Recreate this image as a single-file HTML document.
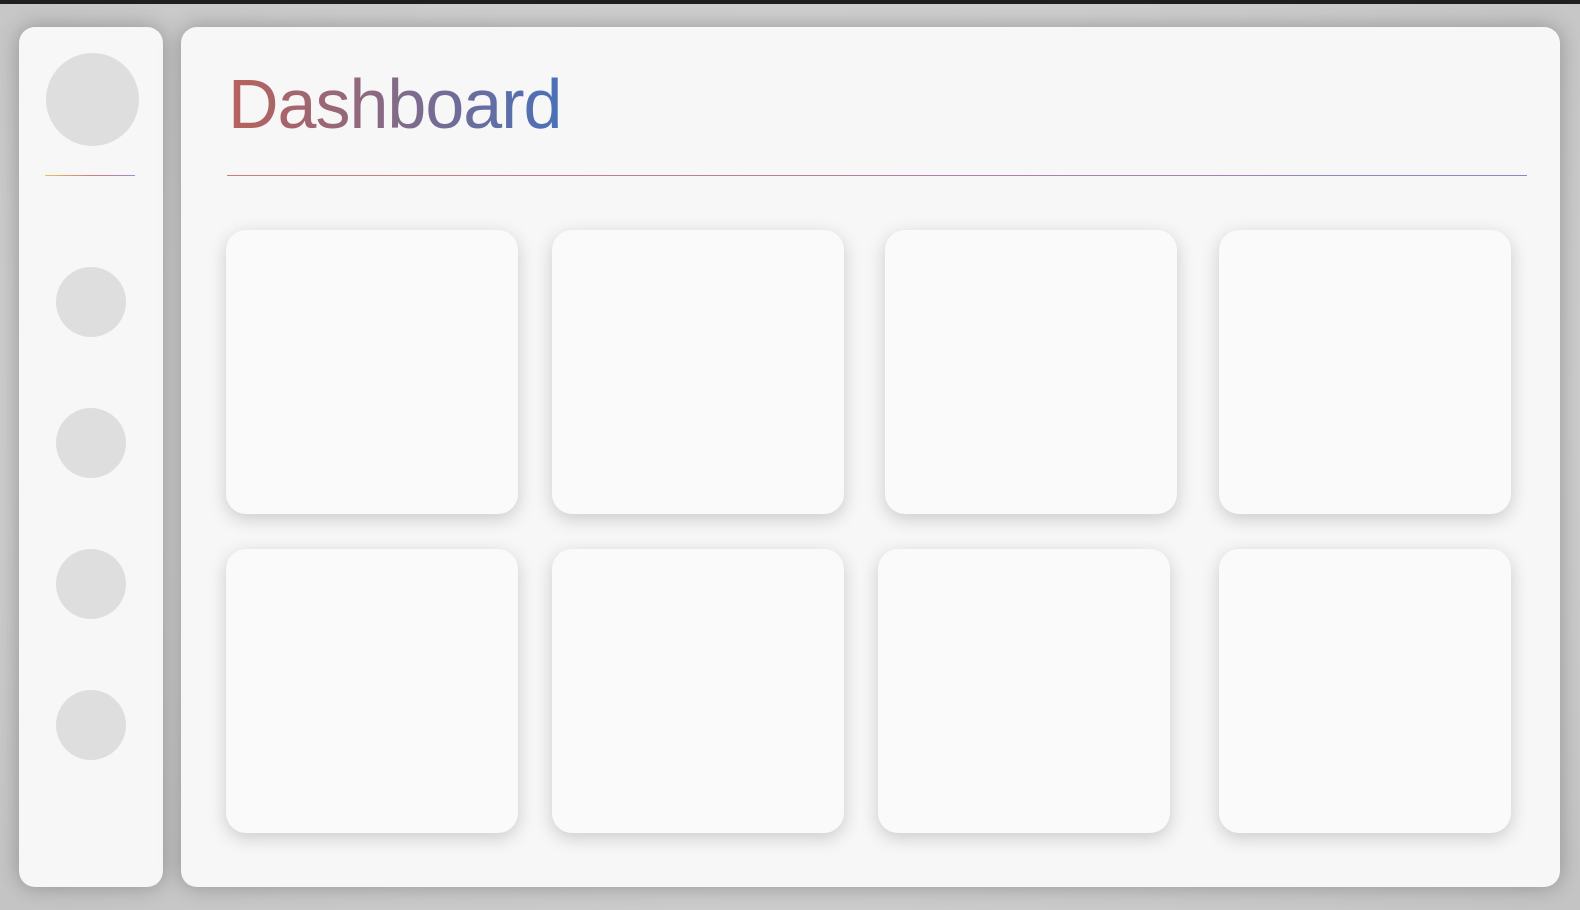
<!DOCTYPE html>
<html><head><style>
html,body{margin:0;padding:0;width:1580px;height:910px;overflow:hidden;background:#d2d2d2;font-family:"Liberation Sans",sans-serif;}
body{background:radial-gradient(ellipse at 50% 45%,#d8d8d8 0%,#cfcfcf 60%,#c4c4c4 100%);position:relative}
.top{position:absolute;left:0;top:0;width:1580px;height:4px;background:#1f1f1f}
.side{position:absolute;left:19px;top:27px;width:144px;height:860px;background:#f7f7f7;border-radius:16px;box-shadow:0 0 22px rgba(0,0,0,.28)}
.main{position:absolute;left:181px;top:27px;width:1379px;height:860px;background:#f7f7f7;border-radius:16px;box-shadow:0 0 22px rgba(0,0,0,.28)}
.c{position:absolute;border-radius:50%;background:#dedede}
.title{position:absolute;left:228px;top:64px;font-size:70px;line-height:80px;font-family:"Liberation Sans",sans-serif;background:linear-gradient(90deg,#b8625c,#8a6a82 45%,#4a70b9);-webkit-background-clip:text;background-clip:text;color:transparent;letter-spacing:-1px}
.hl{position:absolute;left:227px;top:175px;width:1300px;height:1px;background:linear-gradient(90deg,#d27a78,#b080a8 60%,#8a88c8)}
.sl{position:absolute;left:45px;top:175px;width:90px;height:1px;background:linear-gradient(90deg,#e8c060,#d87a78 50%,#9a90d0)}
.card{position:absolute;width:292px;height:284px;background:#fafafa;border-radius:20px;box-shadow:0 5px 18px rgba(0,0,0,.18)}
</style></head><body>
<div class="top"></div>
<div class="side"></div>
<div class="main"></div>
<div class="c" style="left:46px;top:53px;width:93px;height:93px"></div>
<div class="sl"></div>
<div class="c" style="left:56px;top:267px;width:70px;height:70px"></div>
<div class="c" style="left:56px;top:408px;width:70px;height:70px"></div>
<div class="c" style="left:56px;top:549px;width:70px;height:70px"></div>
<div class="c" style="left:56px;top:690px;width:70px;height:70px"></div>
<div class="title">Dashboard</div>
<div class="hl"></div>
<div class="card" style="left:226px;top:230px"></div>
<div class="card" style="left:552px;top:230px"></div>
<div class="card" style="left:885px;top:230px"></div>
<div class="card" style="left:1219px;top:230px"></div>
<div class="card" style="left:226px;top:549px"></div>
<div class="card" style="left:552px;top:549px"></div>
<div class="card" style="left:878px;top:549px"></div>
<div class="card" style="left:1219px;top:549px"></div>
</body></html>
